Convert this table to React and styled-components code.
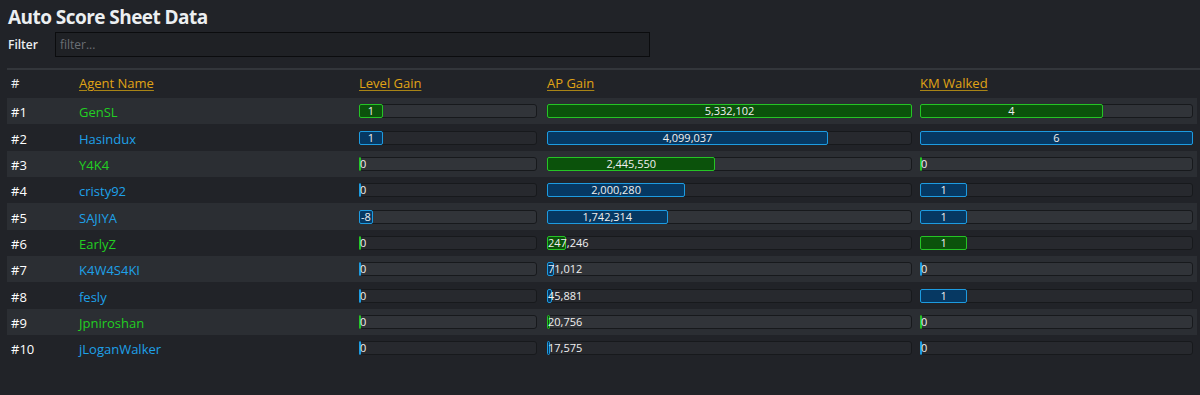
import React from 'react';
import styled, { createGlobalStyle } from 'styled-components';

const GlobalStyle = createGlobalStyle`
  html, body {
    margin: 0;
    padding: 0;
    background: #212328;
    color: #eceff1;
    font-family: "Open Sans", "Noto Sans", sans-serif;
  }
`;

const Page = styled.div`
  padding: 4px 3px 0 7px;
  min-height: 395px;
  box-sizing: border-box;
`;

const Title = styled.h1`
  margin: 0 0 0 1px;
  font-size: 19px;
  font-weight: 700;
  line-height: 26px;
  letter-spacing: -0.55px;
`;

const FilterRow = styled.div`
  display: flex;
  align-items: center;
  gap: 17px;
  margin-top: 2px;
`;

const FilterLabel = styled.label`
  font-size: 12px;
  font-weight: 600;
  padding-left: 1px;
`;

const FilterInput = styled.input`
  width: 595px;
  height: 25px;
  box-sizing: border-box;
  background: #1f2125;
  border: 1px solid #0b0c0e;
  color: #ddd;
  font-family: inherit;
  font-size: 12px;
  padding: 0 4px;
  outline: none;
  &::placeholder {
    color: #6b6f75;
  }
`;

const Divider = styled.hr`
  border: none;
  border-top: 2px solid #33363b;
  margin: 11px -3px 0 0;
`;

const Table = styled.div`
  margin-top: 4px;
  width: 1190px;
`;

const Row = styled.div`
  display: grid;
  grid-template-columns: 68px 280px 188px 373px 1fr;
  align-items: center;
  box-sizing: border-box;
  height: ${p => (p.$head ? '24px' : '26.35px')};
  padding: ${p => (p.$head ? '0 0 6px' : '2px 0 0')};
  background: ${p => (p.$striped ? '#2b2e33' : 'transparent')};
  font-size: 13px;
`;

const Cell = styled.div`
  padding: 0 4px;
  white-space: nowrap;
`;

const Rank = styled(Cell)`
  color: #ffffff;
`;

const HeadLink = styled.a`
  color: #e0a315;
  text-decoration: underline;
  text-decoration-color: #a88416;
  text-underline-offset: 2px;
  cursor: pointer;
`;

const Agent = styled(Cell)`
  color: ${p => (p.$team === 'enl' ? '#22cf22' : '#1ea1e8')};
`;

const Track = styled.div`
  display: flex;
  height: 14px;
  margin-top: -2px;
  box-sizing: border-box;
  border: 1px solid #17191c;
  border-radius: 3px;
  background: rgba(255, 255, 255, 0.03);
  margin-right: ${p => p.$right || 0}px;
`;

const Fill = styled.div`
  flex: none;
  margin: -1px 0 -1px -1px;
  box-sizing: content-box;
  border: 1px solid ${p => (p.$team === 'enl' ? '#25c425' : '#1d9be0')};
  background: ${p => (p.$team === 'enl' ? '#0b520b' : '#063862')};
  border-radius: 2px;
  height: 12px;
  font-size: 11px;
  line-height: 12px;
  color: #f0f0f0;
  text-align: center;
  white-space: nowrap;
`;

const rows = [
  { name: 'GenSL', team: 'enl', level: 1, ap: 5332102, km: 4 },
  { name: 'Hasindux', team: 'res', level: 1, ap: 4099037, km: 6 },
  { name: 'Y4K4', team: 'enl', level: 0, ap: 2445550, km: 0 },
  { name: 'cristy92', team: 'res', level: 0, ap: 2000280, km: 1 },
  { name: 'SAJIYA', team: 'res', level: -8, ap: 1742314, km: 1 },
  { name: 'EarlyZ', team: 'enl', level: 0, ap: 247246, km: 1 },
  { name: 'K4W4S4KI', team: 'res', level: 0, ap: 71012, km: 0 },
  { name: 'fesly', team: 'res', level: 0, ap: 45881, km: 1 },
  { name: 'Jpniroshan', team: 'enl', level: 0, ap: 20756, km: 0 },
  { name: 'jLoganWalker', team: 'res', level: 0, ap: 17575, km: 0 },
];

const Bar = ({ value, max, team, right }) => {
  const w = value < 0 ? undefined : `${(value / max) * 100}%`;
  return (
    <Track $right={right}>
      <Fill $team={team} style={w !== undefined ? { width: w } : { padding: '0 1px' }}>
        {value.toLocaleString('en-US')}
      </Fill>
    </Track>
  );
};

export default function App() {
  const apMax = Math.max(...rows.map(r => r.ap));
  const kmMax = Math.max(...rows.map(r => r.km));
  return (
    <Page>
      <GlobalStyle />
      <Title>Auto Score Sheet Data</Title>
      <FilterRow>
        <FilterLabel>Filter</FilterLabel>
        <FilterInput placeholder="filter..." />
      </FilterRow>
      <Divider />
      <Table>
        <Row $head>
          <Cell>#</Cell>
          <Cell><HeadLink>Agent Name</HeadLink></Cell>
          <Cell><HeadLink>Level Gain</HeadLink></Cell>
          <Cell><HeadLink>AP Gain</HeadLink></Cell>
          <Cell><HeadLink>KM Walked</HeadLink></Cell>
        </Row>
        {rows.map((r, i) => (
          <Row key={r.name} $striped={i % 2 === 0}>
            <Rank>#{i + 1}</Rank>
            <Agent $team={r.team}>{r.name}</Agent>
            <Cell><Bar value={r.level} max={8} team={r.team} right={2} /></Cell>
            <Cell><Bar value={r.ap} max={apMax} team={r.team} /></Cell>
            <Cell><Bar value={r.km} max={kmMax} team={r.team} /></Cell>
          </Row>
        ))}
      </Table>
    </Page>
  );
}
